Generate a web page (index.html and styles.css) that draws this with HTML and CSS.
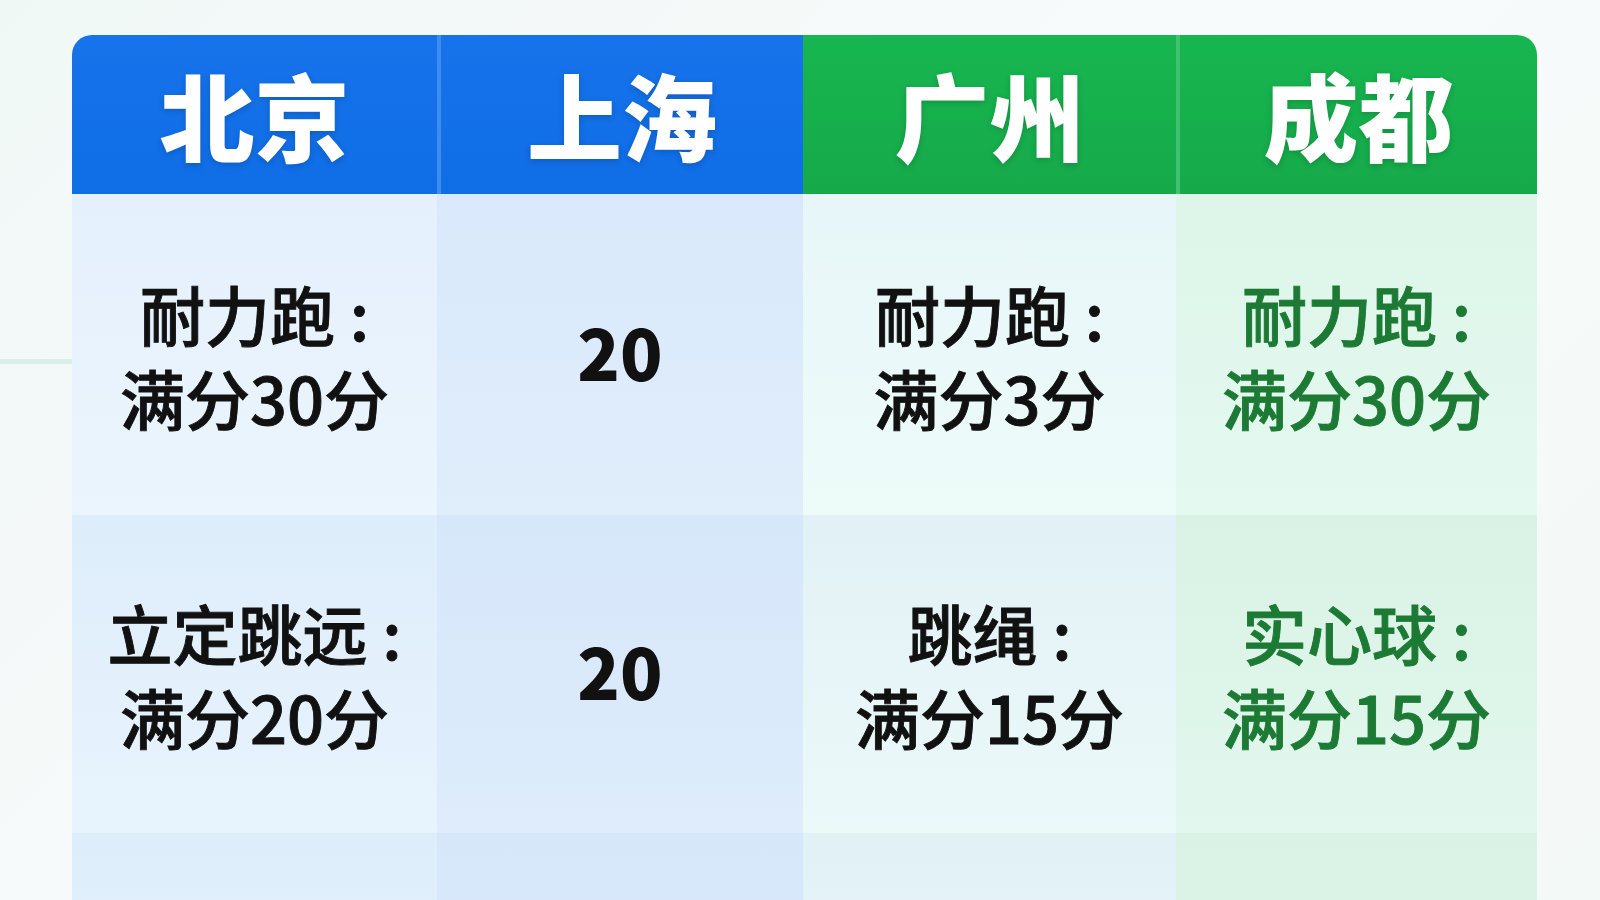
FILE: index.html
```html
<!DOCTYPE html>
<html lang="zh-CN">
<head>
<meta charset="utf-8">
<title>体育中考项目对比</title>
<link rel="stylesheet" href="styles.css">
</head>
<body>
<div class="page">
  <div class="table">
    <div class="th th-blue th-first">北京</div>
    <div class="th th-blue th-sep">上海</div>
    <div class="th th-green">广州</div>
    <div class="th th-green th-sep th-last">成都</div>

    <div class="td c1"><span class="ln">耐力跑 :</span><span class="ln">满分30分</span></div>
    <div class="td c2"><span class="num">20</span></div>
    <div class="td c3"><span class="ln">耐力跑 :</span><span class="ln">满分3分</span></div>
    <div class="td c4 green"><span class="ln">耐力跑 :</span><span class="ln">满分30分</span></div>

    <div class="td c1 r2"><span class="ln">立定跳远 :</span><span class="ln">满分20分</span></div>
    <div class="td c2 r2"><span class="num">20</span></div>
    <div class="td c3 r2"><span class="ln">跳绳 :</span><span class="ln">满分15分</span></div>
    <div class="td c4 r2 green"><span class="ln">实心球 :</span><span class="ln">满分15分</span></div>

    <div class="td c1 r3"></div>
    <div class="td c2 r3"></div>
    <div class="td c3 r3"></div>
    <div class="td c4 r3"></div>
  </div>
</div>
</body>
</html>
```

FILE: styles.css
```css
html, body {
  margin: 0;
  padding: 0;
}
body {
  width: 1600px;
  height: 900px;
  overflow: hidden;
  background:
    linear-gradient(180deg, transparent 359px, #dcefe6 359px, #dcefe6 364px, transparent 364px) 0 0 / 72px 900px no-repeat,
    linear-gradient(135deg, #f0f8f6 0%, #f8fbfb 50%, #f3f9f7 100%);
  font-family: "Noto Sans CJK SC", "Noto Sans", sans-serif;
}
.page {
  padding: 35px 0 0 72px;
}
.table {
  display: grid;
  grid-template-columns: 365px 366px 373px 361px;
  grid-template-rows: 159px 321px 318px 320px;
  width: 1465px;
}
.th {
  display: flex;
  align-items: center;
  justify-content: center;
  color: #ffffff;
  font-size: 95px;
  font-weight: 900;
  line-height: 1;
  padding-bottom: 2px;
  text-shadow: 0 2px 6px rgba(0, 0, 0, 0.18);
}
.th-blue {
  background: linear-gradient(180deg, #1673ea 0%, #0f6de6 100%);
}
.th-green {
  background: linear-gradient(180deg, #17b650 0%, #16a94a 100%);
}
.th-first {
  border-top-left-radius: 20px;
}
.th-last {
  border-top-right-radius: 20px;
}
.th-blue.th-sep {
  border-left: 4px solid #3d8cf0;
}
.th-green.th-sep {
  border-left: 4px solid #3fc26e;
}
.td {
  display: flex;
  flex-direction: column;
  align-items: center;
  justify-content: center;
  text-align: center;
  color: #111111;
  font-size: 65px;
  font-weight: 500;
  -webkit-text-stroke: 0.9px currentColor;
}
.ln {
  display: block;
  height: 84px;
  line-height: 84px;
  white-space: nowrap;
}
.num {
  display: block;
  font-size: 70px;
  font-weight: 900;
  line-height: 80px;
  margin-bottom: 8px;
  -webkit-text-stroke: 0;
}
.green {
  color: #1c7a34;
}
.c1 { background: linear-gradient(180deg, #e4f0fc 0%, #ebf5fd 100%); }
.c2 { background: linear-gradient(180deg, #d9e9fb 0%, #e0edfb 100%); }
.c3 { background: linear-gradient(180deg, #e7f6f8 0%, #edfbf9 100%); }
.c4 { background: linear-gradient(180deg, #def5ea 0%, #e4f9ef 100%); }
.c1.r2, .c1.r3 { background: linear-gradient(180deg, #deedfb 0%, #e8f4fd 100%); }
.c2.r2, .c2.r3 { background: linear-gradient(180deg, #d6e7fa 0%, #deecfb 100%); }
.c3.r2, .c3.r3 { background: linear-gradient(180deg, #e2f1f6 0%, #ebf9f9 100%); }
.c4.r2, .c4.r3 { background: linear-gradient(180deg, #daf1e5 0%, #e2f8ee 100%); }
```
